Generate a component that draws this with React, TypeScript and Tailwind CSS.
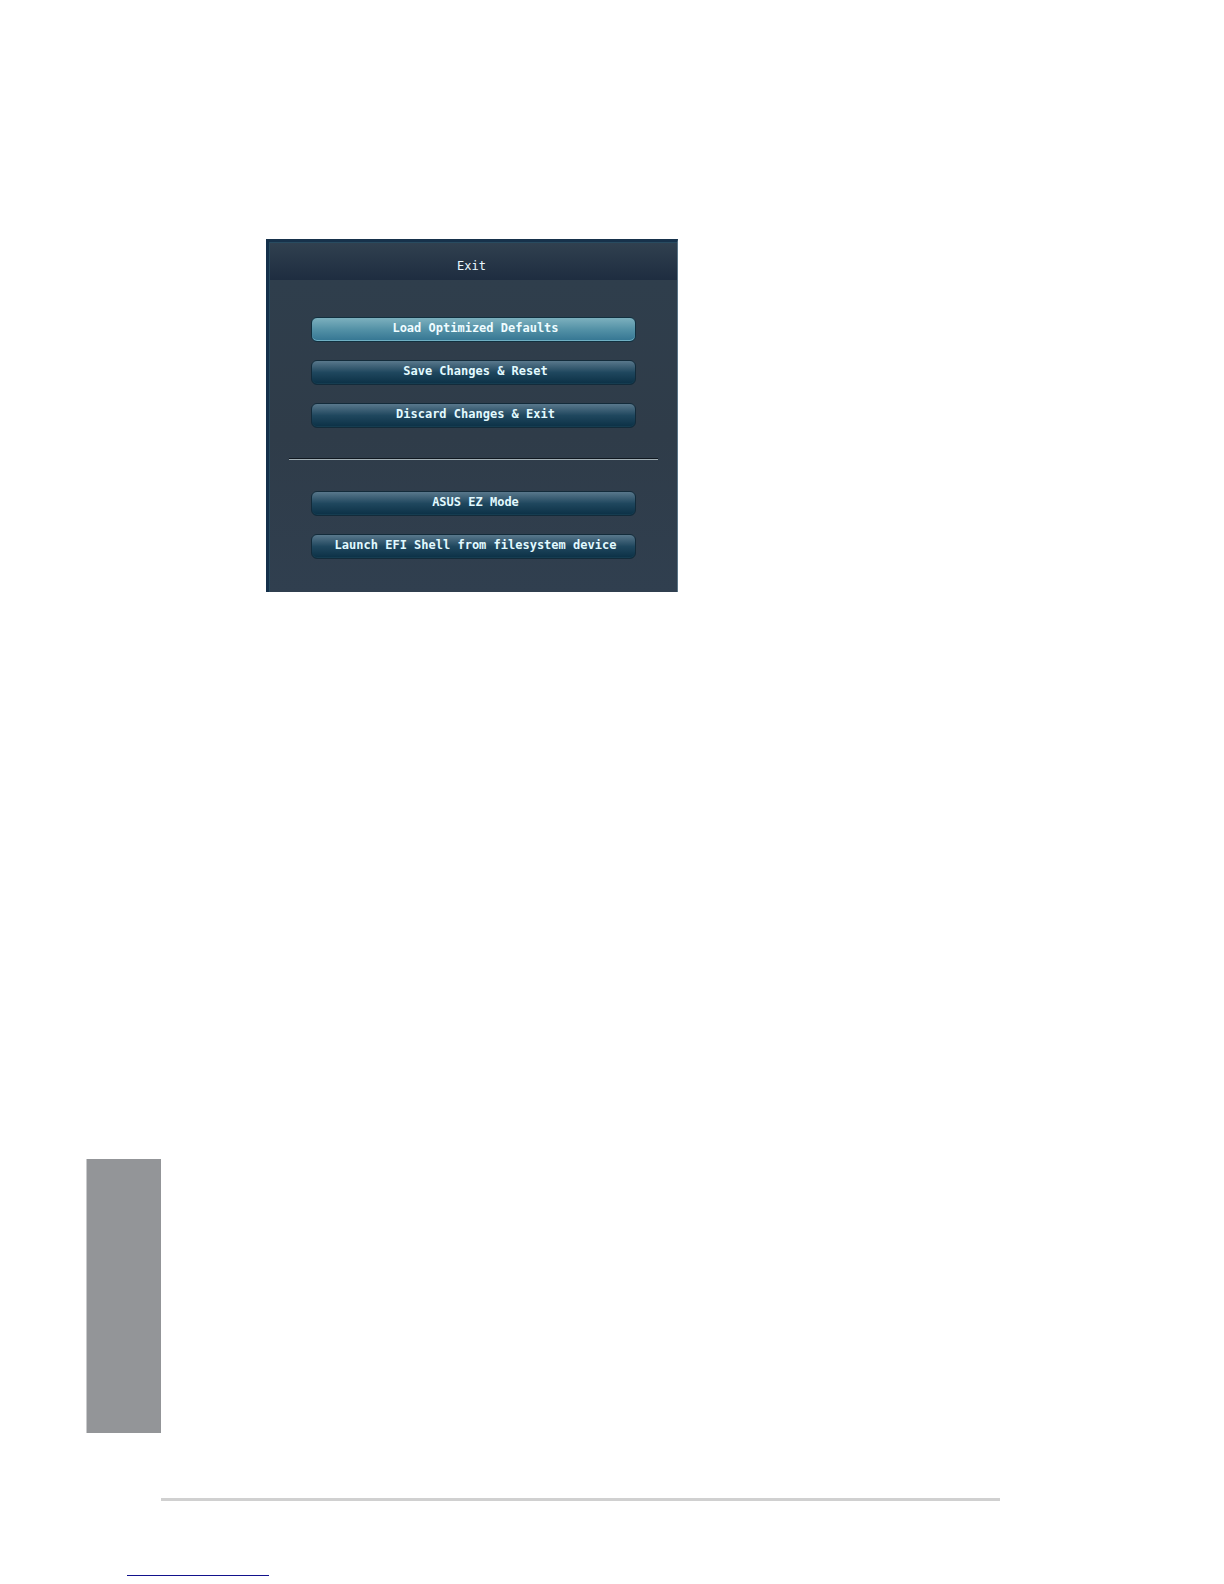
import clsx from "clsx";

const saveOptions = [
  { label: "Load Optimized Defaults", active: true },
  { label: "Save Changes & Reset", active: false },
  { label: "Discard Changes & Exit", active: false },
];

const launchOptions = [
  { label: "ASUS EZ Mode", active: false },
  { label: "Launch EFI Shell from filesystem device", active: false },
];

function MenuButton({ label, active }: { label: string; active: boolean }) {
  return (
    <button
      type="button"
      className={clsx(
        "flex h-[25px] w-full items-center justify-center rounded-md border pb-1 pl-1 text-[12px] leading-4 font-bold whitespace-nowrap",
        active
          ? "border-[#12303f] bg-linear-to-b from-[#7cb0be] via-[#5391a6] to-[#347592] text-[#effcff] shadow-[inset_0_-1px_0_#6fb0c4]"
          : "border-[#132b3a] bg-linear-to-b from-[#59788c] via-[#1f475e] to-[#0b3045] text-[#e2faff] shadow-[inset_0_-1px_0_#153c50]"
      )}
    >
      {label}
    </button>
  );
}

export default function App() {
  return (
    <div className="flex min-h-screen flex-col bg-white font-['DejaVu_Sans_Mono',monospace]">
      {/* Exit menu */}
      <main className="pt-[239px] pl-[266px]">
        <section className="w-full max-w-[412px] border-t-3 border-r border-l-3 border-t-[#17324b] border-r-[#5b7587] border-l-[#14304a] bg-[#2f3d4b]">
          <header className="flex h-[38px] items-center justify-center border-t border-l border-t-[#284b60] border-l-[#284b60] bg-linear-to-b from-[#30404f] to-[#1e2d40] pt-2 pr-1">
            <h1 className="text-[12px] leading-4 text-[#eaf8ff]">Exit</h1>
          </header>
          <div className="border-l border-[#284b60] bg-linear-to-b from-[#2f3e4c] via-[#2f3c49] to-[#303f4f] px-[19px] pt-[37px] pb-[33px]">
            <div className="flex flex-col gap-[18px] px-[22px]">
              {saveOptions.map((o) => (
                <MenuButton key={o.label} label={o.label} active={o.active} />
              ))}
            </div>
            <hr className="mt-[30px] mb-[31px] border-t border-b border-t-[#101820] border-b-[#a3b0b6]" />
            <div className="flex flex-col gap-[18px] px-[22px]">
              {launchOptions.map((o) => (
                <MenuButton key={o.label} label={o.label} active={o.active} />
              ))}
            </div>
          </div>
        </section>
      </main>

      {/* Chapter tab */}
      <aside className="mt-auto ml-[86px] h-[274px] w-[75px] border-l border-[#c9cacc] bg-[#939598]" />

      {/* Page footer */}
      <footer className="pt-[65px] pb-2">
        <hr className="mr-[224px] ml-[161px] border-t-3 border-[#d0d0d0]" />
        <hr className="mt-[74px] ml-[127px] w-[142px] border-[#12128c]" />
      </footer>
    </div>
  );
}
